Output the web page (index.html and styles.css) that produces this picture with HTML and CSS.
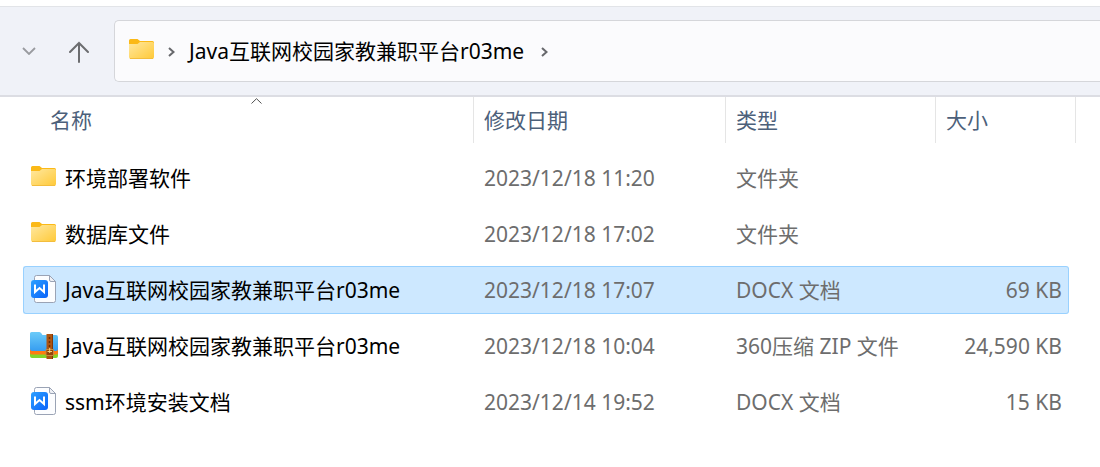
FILE: index.html
```
<!DOCTYPE html>
<html lang="zh-CN">
<head>
  <meta charset="UTF-8" />
  <meta name="viewport" content="width=device-width, initial-scale=1.0"/>
  <title>Java互联网校园家教兼职平台r03me</title>
  <link rel="stylesheet" href="styles.css">
</head>
<body>

  <!-- shared icons -->
  <svg class="sprite" aria-hidden="true">
    <defs>
      <linearGradient id="folderFill" x1="0" y1="0" x2="1" y2="1">
        <stop offset="0" stop-color="#ffe8a0"/>
        <stop offset="1" stop-color="#ffc937"/>
      </linearGradient>
      <linearGradient id="docFill" x1="0" y1="0" x2="1" y2="1">
        <stop offset="0" stop-color="#2ca0ff"/>
        <stop offset="1" stop-color="#0a63fa"/>
      </linearGradient>
      <linearGradient id="zipFill" x1="0" y1="0" x2="0" y2="1">
        <stop offset="0" stop-color="#6bcbf9"/>
        <stop offset="1" stop-color="#369df0"/>
      </linearGradient>
      <symbol id="folder" viewBox="0 1 28 28">
        <path d="M1 5.500Q1 4 2.500 4H9.500L12 6H24.500Q26 6 26 7.500V12H1z" fill="#fbb917"/>
        <path d="M1 9H9.500L12 7H24.500Q26 7 26 8.500V22Q26 24 24 24H3Q1 24 1 22z" fill="url(#folderFill)"/>
        <path d="M2 23.500H25" stroke="#f3bd3d" fill="none"/>
      </symbol>
      <symbol id="docx" viewBox="0 0 28 28">
        <path d="M6.500 .5H19.500L25.500 6.500V25.500Q25.500 27.500 23.500 27.500H6.500Q4.500 27.500 4.500 25.500V2.500Q4.500 .5 6.500 .5z" fill="#fcfdff" stroke="#9aa3b5"/>
        <path d="M19.500 .5V5Q19.500 6.500 21 6.500H25.500z" fill="#eef0f5" stroke="#9aa3b5"/>
        <rect x="1" y="5" width="17" height="18" rx="3" fill="url(#docFill)"/>
        <path d="M5 9.500V17L9.500 13L14 17V9.500" fill="none" stroke="#fff" stroke-width="2"/>
      </symbol>
      <symbol id="zip" viewBox="0 0 28 28">
        <path d="M0 19H28V25Q28 27 26 27H2Q0 27 0 25z" fill="#82d52b"/>
        <path d="M0 17H28V22Q28 23.500 26 23.500H2Q0 23.500 0 22z" fill="#ff7b0f"/>
        <path d="M0 2.500Q0 1 1.500 1H9.500Q10.500 1 11.500 2.500L12.500 4H26Q28 4 28 6V18Q28 20 26 20H2Q0 20 0 18z" fill="url(#zipFill)"/>
        <path d="M16.500 3H23V28H16.500z" fill="#ad5411"/>
        <path d="M22 3H23V28H22z" fill="#823704"/>
        <path d="M19.500 6V8M19.500 10V12M19.500 14V16" stroke="#6c2c02" stroke-width="1.500"/>
        <path d="M16 18.500H23.500V24.500H16z" fill="#934509" stroke="#c98a3c"/>
        <path d="M19.700 17V22M17.500 20.500H22" fill="none" stroke="#f6d27c"/>
      </symbol>
    </defs>
  </svg>

  <header class="toolbar">
    <button type="button" class="nav-btn recent" aria-label="最近浏览的位置">
      <svg width="14" height="8" viewBox="0 0 14 8"><path d="M1 1L7 7L13 1" fill="none" stroke="#999b9f" stroke-width="1.800"/></svg>
    </button>
    <button type="button" class="nav-btn up" aria-label="上移一级">
      <svg width="20" height="22" viewBox="0 0 20 22"><path d="M10 21V2M1 11L10 2L19 11" fill="none" stroke="#6c6d70" stroke-width="2" stroke-linecap="round"/></svg>
    </button>
    <nav class="address" aria-label="地址">
      <svg class="icon"><use href="#folder"/></svg>
      <svg class="crumb-arrow" viewBox="0 0 7 10"><path d="M1 1L5.500 5L1 9" fill="none" stroke="#67686c" stroke-width="2"/></svg>
      <a href="#">Java互联网校园家教兼职平台r03me</a>
      <svg class="crumb-arrow" viewBox="0 0 7 10"><path d="M1 1L5.500 5L1 9" fill="none" stroke="#67686c" stroke-width="2"/></svg>
    </nav>
  </header>

  <main>
    <table class="files">
      <colgroup>
        <col class="col-name">
        <col class="col-date">
        <col class="col-type">
        <col class="col-size">
        <col class="col-end">
      </colgroup>
      <thead>
        <tr>
          <th class="name-head" aria-sort="ascending">
            <button type="button">名称
              <svg class="sort" viewBox="0 0 11 6"><path d="M.5 5.500L5.500 .7L10.500 5.500" fill="none" stroke="#505050"/></svg>
            </button>
          </th>
          <th><button type="button">修改日期</button></th>
          <th><button type="button">类型</button></th>
          <th colspan="2"><button type="button">大小</button></th>
        </tr>
      </thead>
      <tbody>
        <tr>
          <td><div class="file"><svg class="icon"><use href="#folder"/></svg>环境部署软件</div></td>
          <td>2023/12/18 11:20</td>
          <td>文件夹</td>
          <td class="size"></td>
        </tr>
        <tr>
          <td><div class="file"><svg class="icon"><use href="#folder"/></svg>数据库文件</div></td>
          <td>2023/12/18 17:02</td>
          <td>文件夹</td>
          <td class="size"></td>
        </tr>
        <tr class="selected">
          <td><div class="file"><svg class="icon"><use href="#docx"/></svg>Java互联网校园家教兼职平台r03me</div></td>
          <td>2023/12/18 17:07</td>
          <td>DOCX 文档</td>
          <td class="size">69 KB</td>
        </tr>
        <tr>
          <td><div class="file"><svg class="icon"><use href="#zip"/></svg>Java互联网校园家教兼职平台r03me</div></td>
          <td>2023/12/18 10:04</td>
          <td>360压缩 ZIP 文件</td>
          <td class="size">24,590 KB</td>
        </tr>
        <tr>
          <td><div class="file"><svg class="icon"><use href="#docx"/></svg>ssm环境安装文档</div></td>
          <td>2023/12/14 19:52</td>
          <td>DOCX 文档</td>
          <td class="size">15 KB</td>
        </tr>
      </tbody>
    </table>
  </main>

</body>
</html>
```
FILE: styles.css
```
* {
  box-sizing: border-box;
}

body {
  margin: 0;
  padding-top: 6px;
  background-color: #fff;
  color: #000;
  font-family: "Noto Sans", "Noto Sans CJK SC", sans-serif;
  font-size: 21px;
  line-height: 28px;
}

button {
  padding: 0;
  border: none;
  background: none;
  font: inherit;
  color: inherit;
  cursor: pointer;
}

svg {
  display: block;
  flex-shrink: 0;
}

.sprite {
  position: absolute;
  width: 0;
  height: 0;
}

.icon {
  width: 28px;
  height: 28px;
  margin-bottom: 2px;
}

.toolbar {
  display: flex;
  align-items: center;
  padding: 13px 0 13px 22px;
  background-color: #f0f2f8;
  border-top: 1px solid #e2e4e8;
  border-bottom: 2px solid #dcdde3;
}

.nav-btn {
  display: flex;
  align-items: center;
}

.up {
  padding-top: 2px;
  margin: 0 25px 0 33px;
}

.address {
  flex: 1;
  display: flex;
  align-items: center;
  height: 62px;
  padding-left: 13px;
  background-color: #fbfbfd;
  border: 1px solid #d5d6da;
  border-right: none;
  border-radius: 5px 0 0 5px;
}

.address a {
  margin: 0 17px 0 14px;
  color: #000;
  text-decoration: none;
}

.crumb-arrow {
  width: 7px;
  height: 10px;
  margin-top: 2px;
}

.address .icon + .crumb-arrow {
  margin-left: 12px;
}

main {
  padding: 0 24px 0 23px;
}

.files {
  width: 100%;
  margin-top: -8px;
  table-layout: fixed;
  border-collapse: separate;
  border-spacing: 0 8px;
}

.col-date {
  width: 252px;
}

.col-type {
  width: 210px;
}

.col-size {
  width: 133px;
}

.col-end {
  width: 7px;
}

.files th {
  height: 49px;
  padding: 0;
  vertical-align: top;
  font-weight: 400;
  color: #4c607a;
}

.files th button {
  position: relative;
  display: block;
  width: 100%;
  height: 46px;
  padding-left: 10px;
  border-right: 1px solid #e5e5e5;
  text-align: left;
}

.files .name-head {
  padding-left: 17px;
}

.sort {
  position: absolute;
  top: 1px;
  left: 50%;
  width: 11px;
  height: 6px;
  margin-left: -6px;
}

.files td {
  height: 48px;
  padding: 0 0 0 10px;
  border: 1px solid transparent;
  border-width: 1px 0;
  color: #6d6d6d;
  white-space: nowrap;
}

.files td:first-child {
  padding-left: 6px;
  border-left-width: 1px;
  color: #000;
}

.files .size {
  padding: 0 6px 0 0;
  border-right-width: 1px;
  text-align: right;
}

.file {
  display: flex;
  align-items: center;
  gap: 7px;
}

.selected td {
  background-color: #cde8ff;
  border-color: #99d1ff;
}

.selected td:first-child {
  border-radius: 3px 0 0 3px;
}

.selected .size {
  border-radius: 0 3px 3px 0;
}
```
